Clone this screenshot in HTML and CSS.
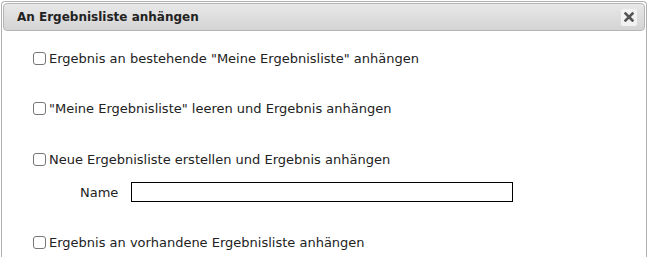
FILE: index.html
```html
<!DOCTYPE html>
<html lang="de">
<head>
<meta charset="utf-8">
<title>An Ergebnisliste anhängen</title>
<link rel="stylesheet" href="styles.css">
</head>
<body>
<div class="dialog">
  <div class="titlebar">
    <span class="title">An Ergebnisliste anhängen</span>
    <span class="close" aria-label="schließen">
      <svg width="10" height="10" viewBox="0 0 10 10"><path d="M1.5 1.5 L8.5 8.5 M8.5 1.5 L1.5 8.5" stroke="#555" stroke-width="2.6" stroke-linecap="square"/></svg>
    </span>
  </div>
  <div class="content">
    <label class="option"><input type="checkbox"><span>Ergebnis an bestehende "Meine Ergebnisliste" anhängen</span></label>
    <label class="option"><input type="checkbox"><span>"Meine Ergebnisliste" leeren und Ergebnis anhängen</span></label>
    <label class="option"><input type="checkbox"><span>Neue Ergebnisliste erstellen und Ergebnis anhängen</span></label>
    <div class="namerow"><span class="namelabel">Name</span><input type="text" class="nameinput"></div>
    <label class="option"><input type="checkbox"><span>Ergebnis an vorhandene Ergebnisliste anhängen</span></label>
  </div>
</div>
</body>
</html>
```

FILE: styles.css
```css
html, body {
  margin: 0;
  padding: 0;
  background: #fff;
  overflow: hidden;
}
body {
  padding: 1px 1px 0 1px;
  font-family: "DejaVu Sans", Verdana, sans-serif;
  font-size: 13px;
  color: #222;
}
.dialog {
  width: 646px;
  height: 256px;
  border: 1px solid #b0b0b0;
  border-bottom: none;
  border-radius: 4px 4px 0 0;
  padding: 1px;
  box-sizing: border-box;
}
.titlebar {
  height: 28px;
  box-sizing: border-box;
  border: 1px solid #b5b5b5;
  border-radius: 4px;
  background: linear-gradient(#e8e8e8, #d4d4d4);
  display: flex;
  align-items: center;
  justify-content: space-between;
  padding: 0 7px 0 13px;
}
.title {
  font-weight: bold;
  font-size: 12px;
  color: #222;
}
.close {
  width: 16px;
  height: 17px;
  background: #f2f2f2;
  border-radius: 2px;
  display: flex;
  align-items: center;
  justify-content: center;
}
.content {
  padding: 19px 0 0 30px;
  display: flex;
  flex-direction: column;
}
.option {
  display: flex;
  align-items: center;
  height: 16px;
}
.option + .option {
  margin-top: 34px;
}
.option:nth-child(3) {
  margin-top: 35px;
}
.option input {
  width: 13px;
  height: 13px;
  margin: 0 3px 0 0;
  appearance: none;
  border: 1px solid #767676;
  border-radius: 3px;
  box-sizing: border-box;
  background: #fff;
}
.namerow {
  display: flex;
  align-items: center;
  margin: 15px 0 32px 47px;
}
.namelabel {
  width: 51px;
}
.nameinput {
  width: 382px;
  height: 20px;
  box-sizing: border-box;
  border: 1px solid #000;
  margin: 0;
  padding: 0;
}
```
